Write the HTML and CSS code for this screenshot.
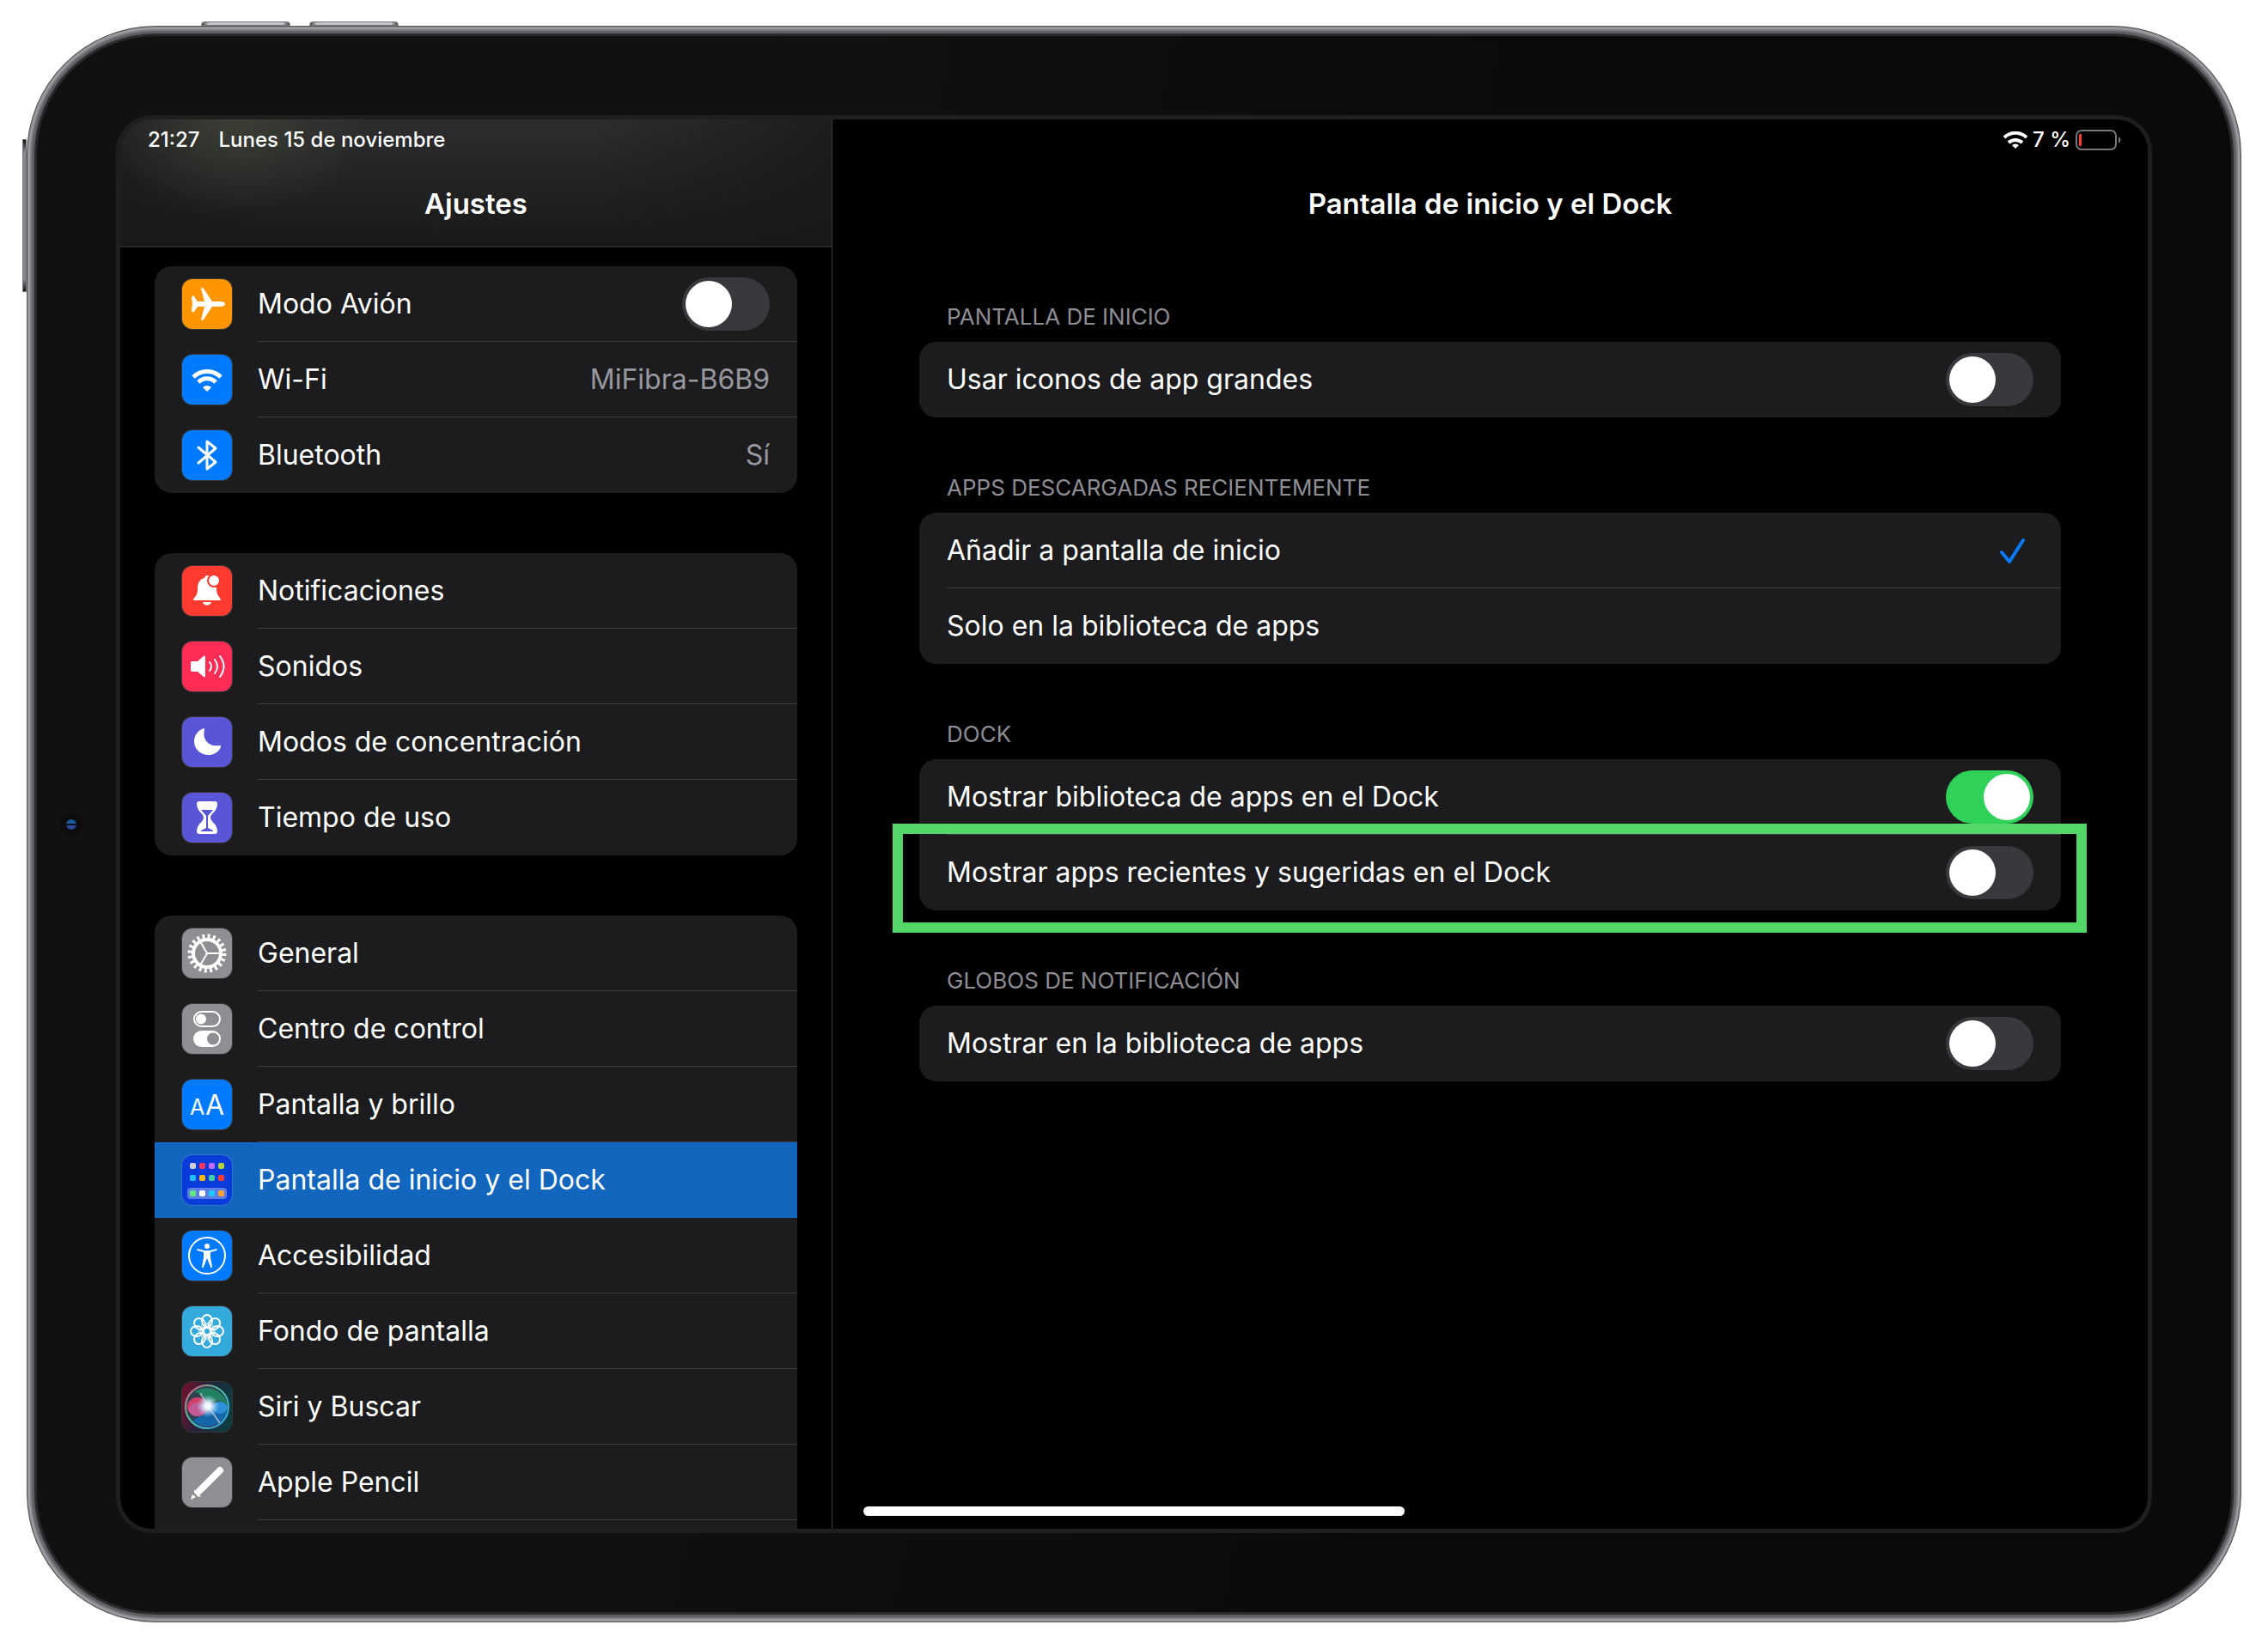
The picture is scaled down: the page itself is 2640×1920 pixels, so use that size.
FILE: index.html
```
<!DOCTYPE html>
<html lang="es">
<head>
    <meta charset="UTF-8">
    <meta name="viewport" content="width=device-width, initial-scale=1.0">
    <title>Pantalla de inicio y el Dock</title>
    <link rel="stylesheet" href="styles.css">
</head>
<body>
    <div class="device">
        <span class="hw-btn vol-up"></span>
        <span class="hw-btn vol-down"></span>
        <span class="hw-btn power"></span>
        <span class="camera"></span>

        <div class="screen">
            <aside class="sidebar">
                <header class="side-header">
                    <div class="status">
                        <span>21:27</span>
                        <span>Lunes 15 de noviembre</span>
                    </div>
                    <h2>Ajustes</h2>
                </header>

                <nav class="side-list">
                    <div class="card">
                        <div class="row">
                            <svg class="icon orange" viewBox="0 0 58 58"><path fill="#fff" d="M50 29c0 2-3 3-6 3h-9l-10 15c-1 1-3 1-3 0l4-15h-8l-4 6c-1 1-3 0-3-1l1-8-1-8c0-1 2-2 3-1l4 6h8l-4-15c0-1 2-1 3 0l10 15h9c3 0 6 1 6 3z"/></svg>
                            <div class="cell">
                                <label for="avion">Modo Avión</label>
                                <input type="checkbox" class="switch" id="avion">
                            </div>
                        </div>
                        <a href="#" class="row">
                            <svg class="icon blue" viewBox="0 0 58 58"><g fill="none" stroke="#fff" stroke-width="5"><path d="M13 26a23 23 0 0 1 32 0"/><path d="M19 32a14 14 0 0 1 20 0"/></g><path fill="#fff" d="M29 43l-5-5a7 7 0 0 1 10 0z"/></svg>
                            <div class="cell"><span>Wi-Fi</span><span class="value">MiFibra-B6B9</span></div>
                        </a>
                        <a href="#" class="row">
                            <svg class="icon blue" viewBox="0 0 58 58"><path fill="none" stroke="#fff" stroke-width="3" stroke-linejoin="round" stroke-linecap="round" d="M19 20l20 17-10 8V13l10 8-20 17"/></svg>
                            <div class="cell"><span>Bluetooth</span><span class="value">Sí</span></div>
                        </a>
                    </div>

                    <div class="card">
                        <a href="#" class="row">
                            <svg class="icon red" viewBox="0 0 58 58"><path fill="#fff" d="M13 40c0-4 5-4 5-13 0-8 3-12 8-13 0-2 2-3 4-3l3 1a8 8 0 0 0 7 13c0 11 5 11 5 15zM24 42h10c-1 5-9 5-10 0z"/><circle cx="37" cy="17" r="7" fill="#fff" stroke="#ff3b30" stroke-width="2"/></svg>
                            <div class="cell"><span>Notificaciones</span></div>
                        </a>
                        <a href="#" class="row">
                            <svg class="icon pink" viewBox="0 0 58 58"><path fill="#fff" d="M10 25c0-2 1-2 2-2h6l7-6c1-1 2 0 2 1v22c0 1-1 2-2 1l-7-6h-6c-1 0-2 0-2-2z"/><g fill="none" stroke="#fff" stroke-width="2" stroke-linecap="round"><path d="M32 24q4 5 0 10"/><path d="M38 21q6 8 0 16"/><path d="M44 17q9 12 0 24"/></g></svg>
                            <div class="cell"><span>Sonidos</span></div>
                        </a>
                        <a href="#" class="row">
                            <svg class="icon indigo" viewBox="0 0 58 58"><path fill="#fff" d="M25 13c1 0 1 1 1 2-3 11 5 20 17 18 2 0 2 0 2 2-2 5-8 9-14 9-10 0-17-7-17-16 0-7 5-13 11-15z"/></svg>
                            <div class="cell"><span>Modos de concentración</span></div>
                        </a>
                        <a href="#" class="row">
                            <svg class="icon indigo" viewBox="0 0 58 58"><path fill="#fff" d="M20 10h18c2 0 3 1 3 3 0 9-8 11-8 16s8 7 8 16c0 2-1 3-3 3H20c-2 0-3-1-3-3 0-9 8-11 8-16s-8-7-8-16c0-2 1-3 3-3z"/><path fill="#5856d6" d="M22 20h14l-6 7v14l6 3v1H22v-1l6-3V27z"/></svg>
                            <div class="cell"><span>Tiempo de uso</span></div>
                        </a>
                    </div>

                    <div class="card last">
                        <a href="#" class="row">
                            <svg class="icon gray" viewBox="0 0 58 58"><g fill="none" stroke="#fff"><circle cx="29" cy="29" r="20" stroke-width="5" stroke-dasharray="3 3.283"/><circle cx="29" cy="29" r="16" stroke-width="4"/><path stroke-width="2" d="M29 29h16M29 29l-8-14M29 29l-8 14"/></g></svg>
                            <div class="cell"><span>General</span></div>
                        </a>
                        <a href="#" class="row">
                            <svg class="icon gray" viewBox="0 0 58 58"><rect x="14" y="9" width="30" height="17" rx="8.500" fill="none" stroke="#fff" stroke-width="2"/><circle cx="22" cy="17.500" r="6" fill="#fff"/><rect x="13" y="31" width="32" height="19" rx="9.500" fill="#fff"/><circle cx="36" cy="40.500" r="7" fill="#8e8e93"/></svg>
                            <div class="cell"><span>Centro de control</span></div>
                        </a>
                        <a href="#" class="row">
                            <svg class="icon blue" viewBox="0 0 58 58"><g class="letters"><text x="9" y="41" font-size="25">A</text><text x="27" y="41" font-size="32">A</text></g></svg>
                            <div class="cell"><span>Pantalla y brillo</span></div>
                        </a>
                        <a href="#" class="row selected">
                            <svg class="icon home" viewBox="0 0 58 58"><rect x="6" y="38" width="46" height="13" rx="4" fill="#5b7de6"/><g><rect x="9" y="9" width="7" height="7" rx="2" fill="#d1d1d6"/><rect x="20" y="9" width="7" height="7" rx="2" fill="#ff375f"/><rect x="31" y="9" width="7" height="7" rx="2" fill="#bf6bff"/><rect x="42" y="9" width="7" height="7" rx="2" fill="#b5d435"/><rect x="9" y="23" width="7" height="7" rx="2" fill="#1fc0ff"/><rect x="20" y="23" width="7" height="7" rx="2" fill="#ffb90a"/><rect x="31" y="23" width="7" height="7" rx="2" fill="#40cfa5"/><rect x="42" y="23" width="7" height="7" rx="2" fill="#ff3b30"/><rect x="9" y="41" width="7" height="7" rx="2" fill="#62e67f"/><rect x="20" y="41" width="7" height="7" rx="2" fill="#fff"/><rect x="31" y="41" width="7" height="7" rx="2" fill="#1fc8ff"/><rect x="42" y="41" width="7" height="7" rx="2" fill="#ffa033"/></g></svg>
                            <div class="cell"><span>Pantalla de inicio y el Dock</span></div>
                        </a>
                        <a href="#" class="row">
                            <svg class="icon blue" viewBox="0 0 58 58"><circle cx="29" cy="29" r="21" fill="none" stroke="#fff" stroke-width="2"/><circle cx="29" cy="18" r="3" fill="#fff"/><path fill="#fff" d="M18 21l8 2h6l8-2c1 0 1 2 0 2l-7 2v6l2 11c0 1-2 2-2 0l-4-10-4 10c0 2-2 1-2 0l2-11v-6l-7-2c-1 0-1-2 0-2z"/></svg>
                            <div class="cell"><span>Accesibilidad</span></div>
                        </a>
                        <a href="#" class="row">
                            <svg class="icon cyan" viewBox="0 0 58 58"><g fill="none" stroke="#fff" stroke-width="2"><ellipse cx="29" cy="17" rx="6" ry="7"/><ellipse cx="29" cy="17" rx="6" ry="7" transform="rotate(45 29 29)"/><ellipse cx="29" cy="17" rx="6" ry="7" transform="rotate(90 29 29)"/><ellipse cx="29" cy="17" rx="6" ry="7" transform="rotate(135 29 29)"/><ellipse cx="29" cy="17" rx="6" ry="7" transform="rotate(180 29 29)"/><ellipse cx="29" cy="17" rx="6" ry="7" transform="rotate(225 29 29)"/><ellipse cx="29" cy="17" rx="6" ry="7" transform="rotate(270 29 29)"/><ellipse cx="29" cy="17" rx="6" ry="7" transform="rotate(315 29 29)"/><circle cx="29" cy="29" r="4"/><path stroke-width="1" d="M29 19v6M29 33v6M19 29h6M33 29h6M22 22l4 4M32 32l4 4M36 22l-4 4M26 32l-4 4"/></g></svg>
                            <div class="cell"><span>Fondo de pantalla</span></div>
                        </a>
                        <a href="#" class="row">
                            <svg class="icon" viewBox="0 0 58 58">
                                <defs>
                                    <linearGradient id="siriBg" x2="1" y2="0.300"><stop offset="0" stop-color="#7a0f2c"/><stop offset="0.500" stop-color="#26213a"/><stop offset="1" stop-color="#0c3b40"/></linearGradient>
                                    <linearGradient id="siriRing" x2="1" y2="1"><stop offset="0" stop-color="#ff5577"/><stop offset="0.400" stop-color="#4ac8a0"/><stop offset="1" stop-color="#3c9cf0"/></linearGradient>
                                    <radialGradient id="siriGlow"><stop offset="0" stop-color="#fff"/><stop offset="0.300" stop-color="#e8f4ff"/><stop offset="1" stop-color="#a8d8ff" stop-opacity="0"/></radialGradient>
                                </defs>
                                <rect width="58" height="58" fill="url(#siriBg)"/>
                                <circle cx="29" cy="29" r="25" fill="#2c4250"/>
                                <path fill="#218061" d="M14 12a25 25 0 0 1 39 15q-14-10-23 0-4-14-16-15z"/>
                                <path fill="#1466a8" d="M12 45q8-3 18-16 8 10 23 5a25 25 0 0 1-41 11z"/>
                                <ellipse cx="18" cy="29" rx="12" ry="11" fill="#d03d68"/>
                                <ellipse cx="17" cy="32" rx="9" ry="8" fill="#c25a98"/>
                                <ellipse cx="44" cy="30" rx="9" ry="7" fill="#2c8fd8"/>
                                <path stroke="#fff" stroke-width="2" opacity="0.500" d="M21 13l9 15 14 20"/>
                                <circle cx="30" cy="28" r="13" fill="url(#siriGlow)"/>
                                <circle cx="29" cy="29" r="25" fill="none" stroke="url(#siriRing)" stroke-width="2"/>
                            </svg>
                            <div class="cell"><span>Siri y Buscar</span></div>
                        </a>
                        <a href="#" class="row">
                            <svg class="icon gray" viewBox="0 0 58 58"><path stroke="#fff" stroke-width="8" stroke-linecap="round" d="M44 15L20 39"/><path fill="#fff" d="M14 37l8 8-3 1-5-5zM12 43l4 3-6 3z"/></svg>
                            <div class="cell"><span>Apple Pencil</span></div>
                        </a>
                    </div>
                </nav>
            </aside>

            <main class="content">
                <div class="status status-right">
                    <svg class="wifi" viewBox="0 0 28 20"><g fill="none" stroke="#fff" stroke-width="4"><path d="M1 7a19 19 0 0 1 26 0"/><path d="M6 13a12 12 0 0 1 16 0"/></g><path fill="#fff" d="M14 20l-4-4a6 6 0 0 1 8 0z"/></svg>
                    <span>7 %</span>
                    <svg class="battery" viewBox="0 0 54 24"><rect x="1" y="1" width="46" height="22" rx="6" fill="none" stroke="#77777b" stroke-width="2"/><rect x="4" y="5" width="3" height="14" rx="1" fill="#ff3b30"/><path fill="#77777b" d="M50 8q5 4 0 8z"/></svg>
                </div>
                <h1>Pantalla de inicio y el Dock</h1>

                <h3>PANTALLA DE INICIO</h3>
                <div class="card">
                    <div class="cell">
                        <label for="grandes">Usar iconos de app grandes</label>
                        <input type="checkbox" class="switch" id="grandes">
                    </div>
                </div>

                <h3>APPS DESCARGADAS RECIENTEMENTE</h3>
                <div class="card">
                    <div class="cell">
                        <label for="inicio">Añadir a pantalla de inicio</label>
                        <input type="radio" name="apps" class="check" id="inicio" checked>
                        <svg class="tick" viewBox="0 0 32 32"><path fill="none" stroke="#0a7aff" stroke-width="4" stroke-linecap="round" stroke-linejoin="round" d="M3 18l9 11L28 4"/></svg>
                    </div>
                    <div class="cell">
                        <label for="solo">Solo en la biblioteca de apps</label>
                        <input type="radio" name="apps" class="check" id="solo">
                    </div>
                </div>

                <h3>DOCK</h3>
                <div class="card marked">
                    <div class="cell">
                        <label for="biblioteca">Mostrar biblioteca de apps en el Dock</label>
                        <input type="checkbox" class="switch" id="biblioteca" checked>
                    </div>
                    <div class="cell">
                        <label for="recientes">Mostrar apps recientes y sugeridas en el Dock</label>
                        <input type="checkbox" class="switch" id="recientes">
                    </div>
                    <span class="highlight"></span>
                </div>

                <h3>GLOBOS DE NOTIFICACIÓN</h3>
                <div class="card">
                    <div class="cell">
                        <label for="globos">Mostrar en la biblioteca de apps</label>
                        <input type="checkbox" class="switch" id="globos">
                    </div>
                </div>
            </main>

            <span class="home-bar"></span>
        </div>
    </div>
</body>
</html>
```
FILE: styles.css
```
* {
    box-sizing: border-box;
}

body {
    margin: 0;
    height: 100vh;
    padding: 30px 31px 31px;
    background-color: #fff;
    color: #fff;
    font-family: Inter, "Liberation Sans", sans-serif;
    font-size: 32px;
    line-height: 44px;
}

h1, h2, h3 {
    margin: 0;
}

a {
    color: inherit;
    text-decoration: none;
}

/* iPad frame */
.device {
    position: relative;
    height: 100%;
    padding: 103px;
    border: 1px solid #55555a;
    border-radius: 150px;
    background: linear-gradient(100deg, #111 0%, #111 30%, #0a0a0a 65%);
    box-shadow: inset 0 0 0 1px #8a8a8f, inset 0 0 0 3px #9c9ca1, inset 0 0 0 5px #7c7c81, inset 0 0 0 8px #5e5e63, inset 0 0 0 11px #2a2a2d;
}

.screen {
    position: relative;
    display: flex;
    height: 100%;
    border: 5px solid #1e1e1f;
    border-radius: 42px;
    background-color: #000;
    overflow: hidden;
}

.hw-btn {
    position: absolute;
    border: 1px solid #77787c;
    background: linear-gradient(90deg, #444 0%, #c4c5c8 8%, #c4c5c8 92%, #444 100%);
}

.vol-up, .vol-down {
    top: -6px;
    width: 104px;
    height: 5px;
    border-radius: 4px 4px 0 0;
}

.vol-up {
    left: 202px;
}

.vol-down {
    left: 328px;
}

.power {
    top: 131px;
    left: -6px;
    width: 5px;
    height: 178px;
    background: linear-gradient(#111 0%, #85888d 8%, #85888d 92%, #111 100%);
}

.camera {
    position: absolute;
    left: 38px;
    top: 50%;
    width: 26px;
    height: 26px;
    margin-top: -13px;
    border: 7px solid #0c0c0e;
    border-radius: 50%;
    background: linear-gradient(#1c5a98 0%, #1c5a98 40%, #08101e 45%, #08101e 55%, #2a4a94 60%);
}

/* left column */
.sidebar {
    flex: 0 0 829px;
    display: flex;
    flex-direction: column;
    border-right: 1px solid #3d3d40;
}

.side-header {
    height: 149px;
    flex-shrink: 0;
    border-bottom: 1px solid #333335;
    background: radial-gradient(ellipse 150px 110px at 135px 0, rgba(62, 65, 54, .9), rgba(50, 52, 48, 0)), linear-gradient(100deg, rgba(24, 24, 25, .6), rgba(24, 24, 25, 0) 30%, rgba(24, 24, 25, 0) 65%, rgba(24, 24, 25, .8)), linear-gradient(#2d2d2f, #19191a);
}

.status {
    display: flex;
    gap: 22px;
    height: 48px;
    padding-left: 32px;
    align-items: center;
    font-size: 24px;
    font-weight: 500;
}

h1, h2 {
    height: 100px;
    text-align: center;
    font-size: 33px;
    font-weight: 600;
    line-height: 100px;
}

.side-list {
    flex: 1;
    min-height: 0;
    display: flex;
    flex-direction: column;
    gap: 70px;
    padding: 22px 40px 0;
}

.card {
    border-radius: 20px;
    background-color: #1c1c1e;
}

.side-list .card {
    flex-shrink: 0;
    overflow: hidden;
}

/* runs past the bottom edge of the screen */
.side-list .last {
    flex: 1 0 auto;
    padding-bottom: 60px;
}

.row {
    display: flex;
    height: 88px;
    padding-left: 32px;
    align-items: center;
    gap: 30px;
}

.row.selected {
    background-color: #1366bd;
}

.icon {
    width: 58px;
    height: 58px;
    border-radius: 12px;
    box-shadow: 0 0 0 1px rgba(255, 255, 255, .12);
    overflow: hidden;
}

.orange { background-color: #ff9500; }
.blue { background-color: #007aff; }
.red { background-color: #ff3b30; }
.pink { background-color: #ff2d55; }
.indigo { background-color: #5856d6; }
.gray { background-color: #8e8e93; }
.home { background-color: #0a3cdc; }
.cyan { background-color: #34aadc; }

.letters {
    fill: #fff;
    font-family: Inter, sans-serif;
    font-weight: 400;
}

.cell {
    flex: 1;
    display: flex;
    height: 88px;
    padding-right: 32px;
    align-items: center;
    justify-content: space-between;
    border-bottom: 1px solid #3d3d40;
}

.card > .cell:last-of-type,
.card:not(.last) .row:last-child .cell,
.row.selected .cell {
    border-bottom-color: transparent;
}

.value {
    color: #98989f;
}

/* right column */
.content {
    flex: 1;
}

.content .card,
.content h3 {
    margin: 0 101px;
}

.content .cell {
    margin-left: 32px;
}

.status-right {
    justify-content: flex-end;
    gap: 6px;
    padding-right: 30px;
}

.wifi {
    width: 28px;
    height: 20px;
}

.battery {
    width: 54px;
    height: 24px;
}

h3 {
    height: 111px;
    padding: 64px 32px 0;
    color: #8d8d93;
    font-size: 26px;
    font-weight: 400;
    line-height: 36px;
}

.switch {
    appearance: none;
    width: 102px;
    height: 62px;
    margin: 0;
    padding: 4px;
    border-radius: 31px;
    background-color: #39393d;
}

.switch::before {
    content: "";
    display: block;
    width: 54px;
    height: 54px;
    border-radius: 50%;
    background-color: #fff;
}

.switch:checked {
    background-color: #30d158;
}

.switch:checked::before {
    margin-left: 40px;
}

.check {
    appearance: none;
    width: 0;
    height: 0;
    margin: 0;
}

.tick {
    width: 32px;
    height: 32px;
    margin-right: 8px;
}

.marked {
    position: relative;
}

.highlight {
    position: absolute;
    top: 75px;
    right: -30px;
    bottom: -26px;
    left: -31px;
    border: 12px solid #53d769;
}

.home-bar {
    position: absolute;
    left: 50%;
    bottom: 15px;
    width: 630px;
    height: 11px;
    margin-left: -315px;
    border-radius: 6px;
    background-color: #fff;
}
```
